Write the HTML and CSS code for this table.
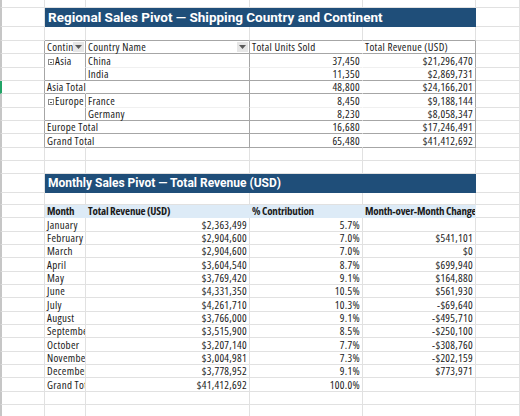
FILE: index.html
```html
<!DOCTYPE html>
<html lang="en">
<head>
  <meta charset="UTF-8">
  <meta name="viewport" content="width=device-width, initial-scale=1">
  <title>Sales Pivots</title>
  <link rel="stylesheet" href="styles.css">
</head>
<body>

<div class="sheet">
  <div class="row h8">
    <div class="c a"></div><div class="c"></div><div class="c"></div><div class="c"></div><div class="c"></div><div class="c"></div>
  </div>

  <!-- Pivot 1 -->
  <div class="row title-row">
    <div class="c a"></div>
    <div class="c title">Regional Sales Pivot — Shipping Country and Continent</div>
    <div class="c"></div>
  </div>
  <div class="row t14">
    <div class="c a"></div><div class="c pb"></div><div class="c pb"></div><div class="c pb"></div><div class="c pb"></div><div class="c"></div>
  </div>
  <div class="row">
    <div class="c a pr"></div>
    <div class="c pr pb head"><span class="txt">Continent</span><span class="dd"><svg width="7" height="4" viewBox="0 0 7 4"><path d="M0 0h7L3.5 4z" fill="#5a5a5a"/></svg></span></div>
    <div class="c pr pb head"><span class="txt">Country Name</span><span class="dd"><svg width="7" height="4" viewBox="0 0 7 4"><path d="M0 0h7L3.5 4z" fill="#5a5a5a"/></svg></span></div>
    <div class="c nr pb">Total Units Sold</div>
    <div class="c pr pb">Total Revenue (USD)</div>
    <div class="c"></div>
  </div>
  <div class="row t14">
    <div class="c a pr"></div>
    <div class="c pr nb grp"><span class="tog"></span>Asia</div>
    <div class="c pr fb">China</div>
    <div class="c nr fb num">37,450</div>
    <div class="c pr fb num">$21,296,470</div>
    <div class="c"></div>
  </div>
  <div class="row">
    <div class="c a pr"></div>
    <div class="c pr pb"></div>
    <div class="c pr pb">India</div>
    <div class="c nr pb num">11,350</div>
    <div class="c pr pb num">$2,869,731</div>
    <div class="c"></div>
  </div>
  <div class="row">
    <div class="c a pr sel"></div>
    <div class="c nr pb spill">Asia Total</div>
    <div class="c pr pb"></div>
    <div class="c nr pb num">48,800</div>
    <div class="c pr pb num">$24,166,201</div>
    <div class="c"></div>
  </div>
  <div class="row t14">
    <div class="c a pr"></div>
    <div class="c pr nb grp spill"><span class="tog"></span>Europe</div>
    <div class="c pr fb">France</div>
    <div class="c nr fb num">8,450</div>
    <div class="c pr fb num">$9,188,144</div>
    <div class="c"></div>
  </div>
  <div class="row">
    <div class="c a pr"></div>
    <div class="c pr pb"></div>
    <div class="c pr pb">Germany</div>
    <div class="c nr pb num">8,230</div>
    <div class="c pr pb num">$8,058,347</div>
    <div class="c"></div>
  </div>
  <div class="row">
    <div class="c a pr"></div>
    <div class="c nr pb spill">Europe Total</div>
    <div class="c pr pb"></div>
    <div class="c nr pb num">16,680</div>
    <div class="c pr pb num">$17,246,491</div>
    <div class="c"></div>
  </div>
  <div class="row t14">
    <div class="c a pr"></div>
    <div class="c nr pb spill">Grand Total</div>
    <div class="c pr pb"></div>
    <div class="c nr pb num">65,480</div>
    <div class="c pr pb num">$41,412,692</div>
    <div class="c"></div>
  </div>
  <div class="row">
    <div class="c a"></div><div class="c"></div><div class="c"></div><div class="c"></div><div class="c"></div><div class="c"></div>
  </div>
  <div class="row">
    <div class="c a"></div><div class="c"></div><div class="c"></div><div class="c"></div><div class="c"></div><div class="c"></div>
  </div>

  <!-- Pivot 2 -->
  <div class="row title-row">
    <div class="c a"></div>
    <div class="c title small">Monthly Sales Pivot — Total Revenue (USD)</div>
    <div class="c"></div>
  </div>
  <div class="row h12">
    <div class="c a"></div><div class="c"></div><div class="c"></div><div class="c"></div><div class="c"></div><div class="c"></div>
  </div>
  <div class="row">
    <div class="c a"></div>
    <div class="c hd">Month</div>
    <div class="c hd">Total Revenue (USD)</div>
    <div class="c hd">% Contribution</div>
    <div class="c hd">Month-over-Month Change</div>
    <div class="c"></div>
  </div>
  <div id="months"></div>
  <div class="row">
    <div class="c a"></div><div class="c"></div><div class="c"></div><div class="c"></div><div class="c"></div><div class="c"></div>
  </div>
  <div class="row">
    <div class="c a"></div><div class="c"></div><div class="c"></div><div class="c"></div><div class="c"></div><div class="c"></div>
  </div>
</div>

<script>
  const months = [
    ['January', '$2,363,499', '5.7%', ''],
    ['February', '$2,904,600', '7.0%', '$541,101'],
    ['March', '$2,904,600', '7.0%', '$0'],
    ['April', '$3,604,540', '8.7%', '$699,940'],
    ['May', '$3,769,420', '9.1%', '$164,880'],
    ['June', '$4,331,350', '10.5%', '$561,930'],
    ['July', '$4,261,710', '10.3%', '-$69,640'],
    ['August', '$3,766,000', '9.1%', '-$495,710'],
    ['September', '$3,515,900', '8.5%', '-$250,100'],
    ['October', '$3,207,140', '7.7%', '-$308,760'],
    ['November', '$3,004,981', '7.3%', '-$202,159'],
    ['December', '$3,778,952', '9.1%', '$773,971'],
    ['Grand Total', '$41,412,692', '100.0%', '']
  ];

  const holder = document.getElementById('months');
  months.forEach((m, i) => {
    const row = document.createElement('div');
    row.className = 'row' + (i % 3 === 0 ? ' t14' : '');
    row.innerHTML =
      '<div class="c a"></div>' +
      '<div class="c">' + m[0] + '</div>' +
      '<div class="c num">' + m[1] + '</div>' +
      '<div class="c num">' + m[2] + '</div>' +
      '<div class="c num">' + m[3] + '</div>' +
      '<div class="c"></div>';
    holder.appendChild(row);
  });
</script>

</body>
</html>
```
FILE: styles.css
```css
body {
  margin: 0;
  background: #fff;
  font-family: "Open Sans", "Liberation Sans", sans-serif;
  font-stretch: 75%;
  font-size: 11px;
  letter-spacing: 0.3px;
  color: #1a1a1a;
}
.sheet {
  width: 520px;
  height: 416px;
  overflow: hidden;
}
.row {
  display: grid;
  grid-template-columns: 45px 41px 164px 113px 113px 1fr;
  height: 13px;
  line-height: 12px;
}
.row.t14 {
  height: 14px;
  line-height: 13px;
}
.row.h8 {
  height: 8px;
}
.row.h12 {
  height: 12px;
}
.row.title-row {
  height: 19px;
  line-height: 18px;
}
.c {
  box-sizing: border-box;
  border-right: 1px solid #e1e1e1;
  border-bottom: 1px solid #e1e1e1;
  padding: 0 2px;
  white-space: nowrap;
  overflow-x: clip;
}
.c.a {
  border-left: 2px solid #c6c6c6;
}
.c.a.sel {
  border-left-color: #21a366;
}
.num {
  text-align: right;
}
.spill {
  overflow: visible;
}

/* title bars */
.title {
  grid-column: span 4;
  background: #1f4e79;
  border-color: #1f4e79;
  color: #fff;
  font-family: Roboto, "Liberation Sans", sans-serif;
  font-stretch: 100%;
  font-weight: bold;
  font-size: 13.5px;
  letter-spacing: 0;
  padding-left: 3px;
}
.title.small {
  font-size: 12px;
}

/* pivot borders */
.pb { border-bottom-color: #a6a6a6; }
.pr { border-right-color: #a6a6a6; }
.nb { border-bottom-color: #fff; }
.nr { border-right-color: #fff; }
.fb { border-bottom-color: #f0f0f0; }

.head {
  display: flex;
  align-items: center;
  padding-right: 1px;
}
.head .txt {
  flex: 1;
  min-width: 0;
  overflow-x: clip;
}
.dd {
  flex: none;
  width: 11px;
  height: 10px;
  background: #e6e6e6;
  display: flex;
  align-items: center;
  justify-content: center;
}
.grp {
  padding-left: 3px;
}
.tog {
  display: inline-block;
  width: 6px;
  height: 6px;
  border: 1px solid #8a8a8a;
  box-sizing: border-box;
  margin-right: 1px;
  position: relative;
  vertical-align: 0;
}
.tog::after {
  content: "";
  position: absolute;
  left: 1px;
  right: 1px;
  top: 2px;
  height: 1px;
  background: #555;
}

/* monthly header */
.hd {
  background: #ddebf7;
  border-color: #ddebf7;
  font-weight: bold;
  letter-spacing: -0.2px;
}
```
